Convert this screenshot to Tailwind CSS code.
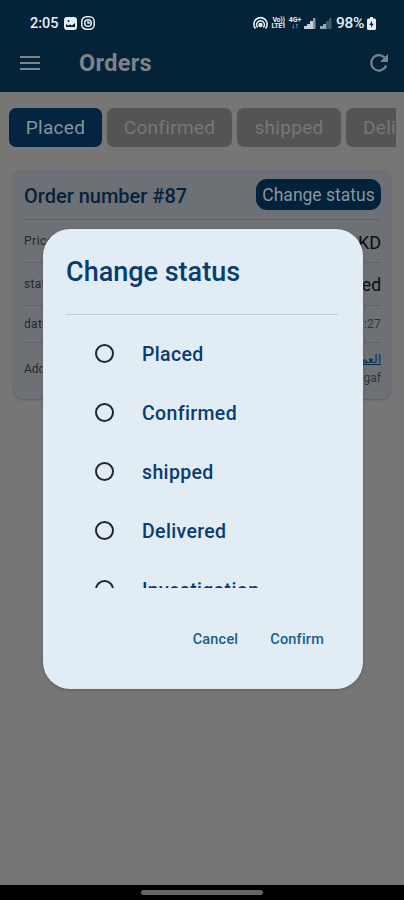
<!DOCTYPE html>
<html lang="en">
<head>
<meta charset="utf-8">
<meta name="viewport" content="width=device-width, initial-scale=1">
<title>Orders</title>
<script src="https://cdn.jsdelivr.net/npm/@tailwindcss/browser@4"></script>
</head>
<body class="relative h-[900px] w-[404px] overflow-hidden bg-[#767676] font-['Roboto','Noto_Sans',sans-serif]">
<div class="flex h-full flex-col">
  <header class="h-[92px] shrink-0 bg-[#042238]">
    <div class="flex h-[46px] items-center pr-[28px] pl-[30px] text-[14.5px] font-medium text-[#e5edf2]">
      <span class="w-[34px] pt-[2px] whitespace-nowrap">2:05</span>
      <svg class="h-[13px] w-[13px]" viewBox="0 0 13 13"><rect width="13" height="13" rx="3" fill="#e5edf2"/><path d="M2 10V7l2 1.500 2-1 2 1L11 6v4z" fill="#042238"/><circle cx="4.500" cy="4" r="1" fill="#042238"/></svg>
      <svg class="ml-[4px] h-[14px] w-[14px]" viewBox="0 0 14 14" fill="none" stroke="#e5edf2" stroke-width="1.500"><rect x=".8" y=".8" width="12.400" height="12.400" rx="4.500"/><circle cx="7" cy="7" r="3.300"/><path d="M7 5v2h2"/></svg>
      <div class="flex-1"></div>
      <svg class="h-[14px] w-[15px]" viewBox="0 0 15 14" fill="none" stroke="#e5edf2" stroke-width="1.600"><path d="M2.500 12.500A6.600 6.600 0 1 1 12.500 12.500M4.700 11.500A3.900 3.900 0 1 1 10.300 11.500"/><circle cx="7.500" cy="9" r="1.400" fill="#e5edf2"/></svg>
      <div class="ml-[3px] w-[15px] text-center text-[7px] leading-[6.500px] font-bold tracking-[-0.3px]"><div>Vo))</div><div>LTE1</div></div>
      <div class="ml-[2px] w-[14px] text-center text-[7px] leading-[6.500px] font-bold"><div>4G+</div><div>↓↑</div></div>
      <svg class="ml-[2px] h-[12px] w-[12px]" viewBox="0 0 12 12"><path d="M0 9h3v3H0zM3 7h3v5H3zM6 4h3v8H6z" fill="#c5d0d8"/><path d="M9 1h2.500v11H9z" fill="#8697a3"/></svg>
      <svg class="ml-[4px] h-[12px] w-[12px]" viewBox="0 0 12 12"><path d="M0 9h3v3H0zM3 7h3v5H3z" fill="#98a8b3"/><path d="M6 4h3v8H6zM9 1h2.500v11H9z" fill="#40586a"/></svg>
      <span class="ml-[4px] w-[31px] pt-[2px] text-[15.500px] tracking-[-0.3px] whitespace-nowrap">98%</span>
      <svg class="h-[13px] w-[9px]" viewBox="0 0 9 13"><path d="M3 0h3v1.500h1.500Q9 1.500 9 3v8.500Q9 13 7.500 13h-6Q0 13 0 11.500V3q0-1.500 1.500-1.500H3z" fill="#e5edf2"/><path d="M5 3.500L2.300 8h1.900L3.900 11 6.700 6.700H4.800z" fill="#042238"/></svg>
    </div>
    <div class="flex h-[34px] items-center pr-[15px] pl-[20px]">
      <svg class="h-[14px] w-[20px]" viewBox="0 0 20 14" fill="none" stroke="#7d8388" stroke-width="2"><path d="M0 1h20M0 7h20M0 13h20"/></svg>
      <h1 class="ml-[39px] pt-[2px] text-[23.500px] font-bold tracking-[0.3px] text-[#7d8388]">Orders</h1>
      <svg class="ml-auto h-[20px] w-[20px]" viewBox="0 0 20 20"><path d="M15.500 4.500A7.700 7.700 0 1 0 17.200 12.500" fill="none" stroke="#7d8388" stroke-width="2.200"/><path d="M19 1v8h-8z" fill="#7d8388"/></svg>
    </div>
  </header>
  <nav class="mt-[16px] mr-[8px] ml-[9px] flex h-[39px] shrink-0 gap-[5px] overflow-hidden text-[19px] tracking-[0.3px] text-[#777]">
    <div class="flex w-[93px] shrink-0 items-center justify-center rounded-[7px] bg-[#032541] pt-[2px] text-[#8b9399]"><span>Placed</span></div>
    <div class="flex w-[125px] shrink-0 items-center justify-center rounded-[7px] bg-[#545454] pt-[2px]"><span>Confirmed</span></div>
    <div class="flex w-[104px] shrink-0 items-center justify-center rounded-[7px] bg-[#545454] pt-[2px]"><span>shipped</span></div>
    <div class="flex w-[120px] shrink-0 items-center rounded-[7px] bg-[#545454] pt-[2px] pl-[17px]"><span>Delivered</span></div>
  </nav>
  <main class="mx-[13px] mt-[23px] h-[229px] shrink-0 rounded-[10px] bg-[#6d7176] pr-[10px] pl-[11px] shadow-[0_1px_2px_#5c5c5c]">
    <div class="flex h-[50px] items-center justify-between border-b border-[#5c6268]">
      <h2 class="pt-[3px] text-[20px] font-medium whitespace-nowrap text-[#06213f]">Order number #87</h2>
      <div class="flex h-[31px] w-[125px] items-center justify-center rounded-[11px] bg-[#02213a] pt-[2px] text-[17.500px] whitespace-nowrap text-[#8b959d]">Change status</div>
    </div>
    <div class="flex h-[43px] items-center justify-between border-b border-[#5c6268] text-[12px] text-[#24282c]"><span class="tracking-[0.5px]">Price</span><span class="pt-[2px] text-[18px] text-[#090d11]">KD</span></div>
    <div class="flex h-[43px] items-center justify-between border-b border-[#5c6268] text-[12px] text-[#24282c]"><span class="tracking-[0.3px]">status</span><span class="pt-[2px] text-[17.500px] text-[#090d11]">Placed</span></div>
    <div class="flex h-[37px] items-center justify-between border-b border-[#5c6268] text-[12px] text-[#24282c]"><span class="tracking-[0.3px]">date</span><span class="tracking-[0.2px] text-[#303438]">:27</span></div>
    <div class="flex h-[52px] items-center justify-between text-[12px] text-[#24282c]"><span>Address</span><div class="text-right leading-[19px]"><div class="text-[#062b4d] underline" dir="rtl">العمـ</div><div class="text-[#303438]">gaf</div></div></div>
  </main>
  <footer class="mt-auto flex h-[15px] items-start justify-center bg-black pt-[5px]"><div class="h-[5px] w-[122px] rounded-full bg-[#666]"></div></footer>
</div>

<section role="dialog" class="absolute top-[229px] left-[43px] flex h-[460px] w-[320px] flex-col rounded-[27px] bg-[#e1ecf4] pr-[25px] pl-[23px] shadow-[0_1px_3px_#555b]">
  <h2 class="flex h-[86px] shrink-0 items-center border-b border-[#c3ccd4] pt-[2px] text-[27px] font-medium text-[#093d70]"><span>Change status</span></h2>
  <div class="mt-[9px] h-[264px] shrink-0 overflow-hidden pl-[29px] text-[19.500px] font-medium tracking-[0.35px] text-[#0b3c70]">
    <div class="flex h-[59px] items-center"><i class="h-[19px] w-[19px] rounded-full border-2 border-[#20272d]"></i><span class="ml-[28px] pt-[2px]">Placed</span></div>
    <div class="flex h-[59px] items-center"><i class="h-[19px] w-[19px] rounded-full border-2 border-[#20272d]"></i><span class="ml-[28px] pt-[2px]">Confirmed</span></div>
    <div class="flex h-[59px] items-center"><i class="h-[19px] w-[19px] rounded-full border-2 border-[#20272d]"></i><span class="ml-[28px] pt-[2px]">shipped</span></div>
    <div class="flex h-[59px] items-center"><i class="h-[19px] w-[19px] rounded-full border-2 border-[#20272d]"></i><span class="ml-[28px] pt-[2px]">Delivered</span></div>
    <div class="flex h-[59px] items-center"><i class="h-[19px] w-[19px] rounded-full border-2 border-[#20272d]"></i><span class="ml-[28px] pt-[2px]">Investigation</span></div>
  </div>
  <div class="mt-[36px] flex h-[30px] items-center justify-end gap-[32px] pt-[2px] pr-[14px] text-[14.500px] font-medium tracking-[0.2px] text-[#17618a]"><span>Cancel</span><span>Confirm</span></div>
</section>
</body>
</html>
